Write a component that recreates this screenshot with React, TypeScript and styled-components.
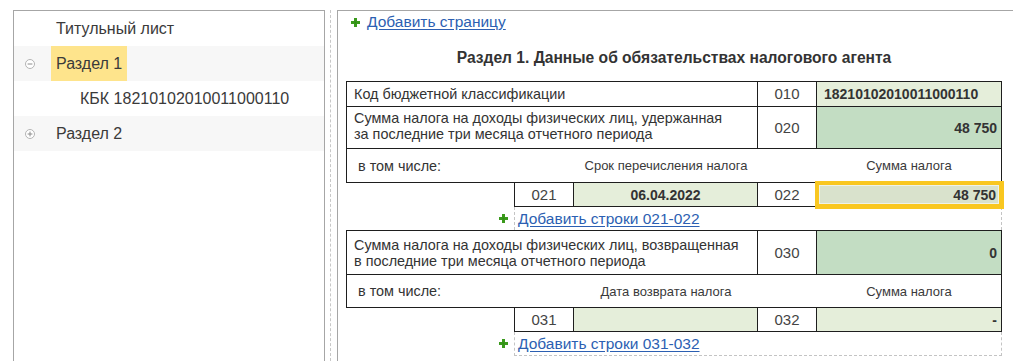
import React from 'react';
import styled, { createGlobalStyle } from 'styled-components';

const Global = createGlobalStyle`
  html, body { margin: 0; padding: 0; background: #fff; }
  body {
    font-family: "Liberation Sans", Arial, sans-serif;
    width: 1013px; height: 361px; overflow: hidden; color: #333;
  }
  * { box-sizing: border-box; }
`;

const Page = styled.div`
  display: flex;
  align-items: flex-start;
  padding: 10px 0 0 13px;
  height: 361px;
`;

/* ---------- Tree ---------- */
const TreePanel = styled.div`
  width: 312px;
  height: 360px;
  flex-shrink: 0;
  border: 1px solid #a6a6a6;
  border-bottom: none;
`;

const TreeRow = styled.div<{ $shaded?: boolean; $indent: number }>`
  height: 35px;
  display: flex;
  align-items: center;
  padding-left: ${p => p.$indent}px;
  background: ${p => (p.$shaded ? '#f7f7f7' : '#fff')};
  font-size: 16px;
  color: #3a3a3a;
`;

const Expander = styled.span`
  width: 10px;
  height: 10px;
  flex-shrink: 0;
  display: flex;
  margin-right: 16px;
`;

const TreeLabel = styled.span<{ $selected?: boolean }>`
  height: 35px;
  line-height: 35px;
  padding: 0 5px;
  background: ${p => (p.$selected ? '#fee48c' : 'transparent')};
  white-space: nowrap;
`;

const ExpandIcon: React.FC<{ open: boolean }> = ({ open }) => (
  <svg width="10" height="10" viewBox="0 0 10 10">
    <circle cx="5" cy="5" r="4.5" fill="#fff" stroke="#b3b3b3" strokeWidth="1" />
    <line x1="2.6" y1="5" x2="7.4" y2="5" stroke="#8c8c8c" strokeWidth="1" />
    {!open && <line x1="5" y1="2.6" x2="5" y2="7.4" stroke="#8c8c8c" strokeWidth="1" />}
  </svg>
);

/* ---------- Splitter ---------- */
const Splitter = styled.div`
  width: 0;
  height: 351px;
  margin: 0 6px 0 5px;
  border-left: 1px dashed #c8c8c8;
`;

/* ---------- Form ---------- */
const FormPanel = styled.div`
  flex: 1;
  height: 351px;
  border-top: 1px solid #a6a6a6;
  border-left: 1px solid #a6a6a6;
  padding-left: 8px;
`;

const AddRow = styled.div`
  height: 22px;
  display: flex;
  align-items: center;
  padding-left: 5px;
  gap: 7px;
`;

const Link = styled.a`
  font-size: 15.5px;
  color: #2c5fb2;
  text-decoration: underline;
  text-underline-offset: 2px;
  cursor: pointer;
  white-space: nowrap;
`;

const PlusIcon = () => (
  <svg width="9" height="9" viewBox="0 0 9 9" style={{ flexShrink: 0 }}>
    <rect x="3" y="0" width="3" height="9" fill="#3a9a1c" />
    <rect x="0" y="3" width="9" height="3" fill="#3a9a1c" />
    <rect x="3.5" y="3.5" width="2" height="2" fill="#2f8a14" />
  </svg>
);

const Title = styled.div`
  width: 656px;
  height: 48px;
  display: flex;
  align-items: center;
  justify-content: center;
  padding-top: 2px;
  font-size: 15.6px;
  font-weight: bold;
  color: #333;
  white-space: nowrap;
`;

const Sheet = styled.div`
  width: 656px;
  font-size: 14.4px;
  color: #333;
`;

const MainGrid = styled.div`
  display: grid;
  grid-template-columns: 411px 59px 185px;
  border-top: 1px solid #1e1e1e;
  border-left: 1px solid #1e1e1e;
`;

type Tone = 'white' | 'light' | 'dark' | 'focus';
const toneBg: Record<Tone, string> = {
  white: '#fff',
  light: '#e5eeda',
  dark: '#c3ddc3',
  focus: '#d9e2cc',
};

const Cell = styled.div<{ $h: number; $tone?: Tone; $align?: 'left' | 'center' | 'right'; $bold?: boolean; $lift?: number }>`
  position: relative;
  height: ${p => p.$h}px;
  border-right: 1px solid #1e1e1e;
  border-bottom: 1px solid #1e1e1e;
  display: flex;
  align-items: center;
  justify-content: ${p => (p.$align === 'right' ? 'flex-end' : p.$align === 'center' ? 'center' : 'flex-start')};
  padding: ${p => (p.$align === 'left' ? `0 4px ${p.$lift || 0}px 7px` : '0 4px')};
  background: ${p => toneBg[p.$tone || 'white']};
  font-weight: ${p => (p.$bold ? 'bold' : 'normal')};
  font-size: ${p => (p.$bold ? '14px' : 'inherit')};
  line-height: 16px;
  white-space: nowrap;
  ${p =>
    p.$tone === 'focus'
      ? `outline: 3px solid #f9c720; outline-offset: -1px; box-shadow: inset 0 0 0 2px #f9c720, inset 0 0 0 3px #eef2e8; z-index: 1; padding-right: 5px;`
      : ''}
`;

const Code = styled(Cell)`
  font-size: 15px;
  color: #444;
`;

const SubHeader = styled.div<{ $h: number }>`
  height: ${p => p.$h}px;
  display: grid;
  grid-template-columns: 167px 60px 184px 59px 184px;
  align-items: center;
  border-left: 1px solid #1e1e1e;
  border-right: 1px solid #1e1e1e;
  border-bottom: 1px solid #1e1e1e;
`;

const SubCaption = styled.span`
  padding-left: 11px;
  font-size: 14.4px;
`;

const ColCaption = styled.span<{ $col: string }>`
  grid-column: ${p => p.$col};
  text-align: center;
  font-size: 13px;
  color: #3a3a3a;
  white-space: nowrap;
`;

const SubGrid = styled.div`
  margin-left: 168px;
  display: grid;
  grid-template-columns: 59px 184px 59px 185px;
  border-left: 1px solid #1e1e1e;
`;

const LinkRow = styled.div<{ $last?: boolean }>`
  margin-left: 168px;
  height: ${p => (p.$last ? 24 : 23)}px;
  display: flex;
  align-items: center;
  gap: 10px;
  border-left: 1px dashed #c4c4c4;
  border-right: 1px dashed #c4c4c4;
  border-bottom: ${p => (p.$last ? '1px dashed #c4c4c4' : 'none')};
  & > svg { margin-left: -16px; }
`;

const Block = styled.div``;

const Label2: React.FC<{ lines: string[] }> = ({ lines }) => (
  <span>
    {lines.map((l, i) => (
      <React.Fragment key={i}>
        {l}
        {i < lines.length - 1 && <br />}
      </React.Fragment>
    ))}
  </span>
);

export default function App() {
  return (
    <>
      <Global />
      <Page>
        <TreePanel>
          <TreeRow $indent={11}>
            <Expander />
            <TreeLabel>Титульный лист</TreeLabel>
          </TreeRow>
          <TreeRow $indent={11} $shaded>
            <Expander>
              <ExpandIcon open />
            </Expander>
            <TreeLabel $selected>Раздел 1</TreeLabel>
          </TreeRow>
          <TreeRow $indent={35}>
            <Expander />
            <TreeLabel>КБК 18210102010011000110</TreeLabel>
          </TreeRow>
          <TreeRow $indent={11} $shaded>
            <Expander>
              <ExpandIcon open={false} />
            </Expander>
            <TreeLabel>Раздел 2</TreeLabel>
          </TreeRow>
        </TreePanel>

        <Splitter />

        <FormPanel>
          <AddRow>
            <PlusIcon />
            <Link>Добавить страницу</Link>
          </AddRow>
          <Title>Раздел 1. Данные об обязательствах налогового агента</Title>

          <Sheet>
            <Block>
              <MainGrid>
                <Cell $h={25} $align="left">Код бюджетной классификации</Cell>
                <Code $h={25} $align="center">010</Code>
                <Cell $h={25} $align="left" $tone="light" $bold>18210102010011000110</Cell>
                <Cell $h={42} $align="left" $lift={4}>
                  <Label2 lines={['Сумма налога на доходы физических лиц, удержанная', 'за последние три месяца отчетного периода']} />
                </Cell>
                <Code $h={42} $align="center">020</Code>
                <Cell $h={42} $align="right" $tone="dark" $bold>48 750</Cell>
              </MainGrid>
              <SubHeader $h={34}>
                <SubCaption>в том числе:</SubCaption>
                <ColCaption $col="3">Срок перечисления налога</ColCaption>
                <ColCaption $col="5">Сумма налога</ColCaption>
              </SubHeader>
              <SubGrid>
                <Code $h={24} $align="center">021</Code>
                <Cell $h={24} $align="center" $tone="light" $bold>06.04.2022</Cell>
                <Code $h={24} $align="center">022</Code>
                <Cell $h={24} $align="right" $tone="focus" $bold>48 750</Cell>
              </SubGrid>
              <LinkRow>
                <PlusIcon />
                <Link>Добавить строки 021-022</Link>
              </LinkRow>
            </Block>

            <Block>
              <MainGrid>
                <Cell $h={44} $align="left">
                  <Label2 lines={['Сумма налога на доходы физических лиц, возвращенная', 'в последние три месяца отчетного периода']} />
                </Cell>
                <Code $h={44} $align="center">030</Code>
                <Cell $h={44} $align="right" $tone="dark" $bold>0</Cell>
              </MainGrid>
              <SubHeader $h={33}>
                <SubCaption>в том числе:</SubCaption>
                <ColCaption $col="3">Дата возврата налога</ColCaption>
                <ColCaption $col="5">Сумма налога</ColCaption>
              </SubHeader>
              <SubGrid>
                <Code $h={24} $align="center">031</Code>
                <Cell $h={24} $align="center" $tone="light" $bold></Cell>
                <Code $h={24} $align="center">032</Code>
                <Cell $h={24} $align="right" $tone="light" $bold>-</Cell>
              </SubGrid>
              <LinkRow $last>
                <PlusIcon />
                <Link>Добавить строки 031-032</Link>
              </LinkRow>
            </Block>
          </Sheet>
        </FormPanel>
      </Page>
    </>
  );
}
